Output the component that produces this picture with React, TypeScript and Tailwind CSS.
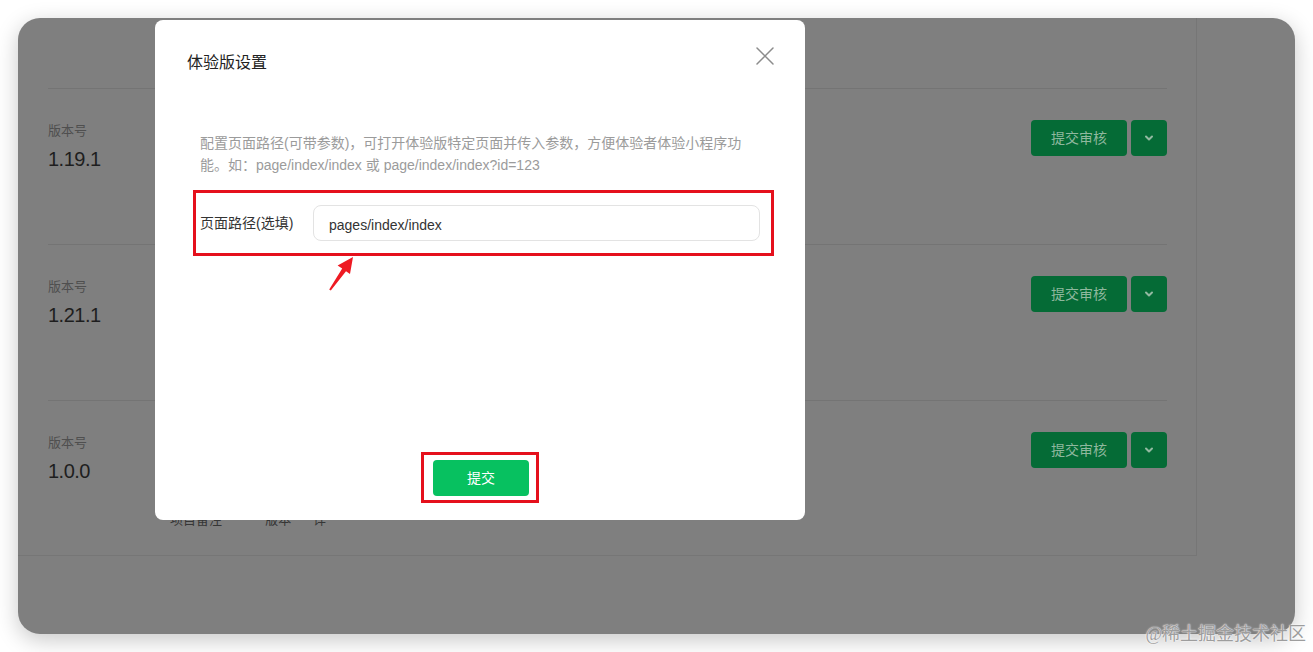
import React from 'react';

const font = { fontFamily: '"Liberation Sans", "Noto Sans CJK SC", sans-serif' };

const versions = ['1.19.1', '1.21.1', '1.0.0'];

const Chevron: React.FC = () => (
    <svg width="12" height="12" viewBox="0 0 12 12" fill="none">
        <path d="M3 4.5 L6 7.5 L9 4.5" stroke="#93b9a1" strokeWidth="2" strokeLinecap="round" strokeLinejoin="round" />
    </svg>
);

const VersionRow: React.FC<{ version: string; last?: boolean }> = ({ version, last }) => (
    <div className="h-[156px] border-t border-[#747474] flex justify-between">
        <div className="flex flex-col pt-[33px]">
            <span className="text-[13px] leading-[18px] text-[#4f4f4f]">版本号</span>
            <span className="text-[20px] leading-[26px] mt-[6px] text-[#1e1e1e] tracking-[-0.5px]">{version}</span>
            {last && (
                <span className="mt-[26px] ml-[122px] text-[13px] text-[#363636] whitespace-nowrap">
                    项目备注&nbsp;&nbsp;&nbsp;&nbsp;&nbsp;&nbsp;&nbsp;&nbsp;&nbsp;&nbsp;&nbsp;&nbsp;版本&nbsp;&nbsp;&nbsp;&nbsp;&nbsp;&nbsp;详
                </span>
            )}
        </div>
        <div className="flex gap-[4px] pt-[31px]">
            <button className="w-[96px] h-[36px] rounded-[4px] bg-[#056b36] text-[14px] text-[#8fb89e]">提交审核</button>
            <button className="w-[36px] h-[36px] rounded-[4px] bg-[#056b36] flex items-center justify-center">
                <Chevron />
            </button>
        </div>
    </div>
);

export default function App() {
    return (
        <div className="w-[1313px] h-[652px] bg-white relative overflow-hidden pt-[18px] pl-[18px]" style={font}>
            {/* dimmed window behind the dialog */}
            <div className="w-[1277px] h-[616px] rounded-[22px] bg-[#7f7f7f] shadow-[0_6px_22px_rgba(0,0,0,0.22)] overflow-hidden">
                <div className="w-[1179px] h-[538px] border-r border-b border-[#767676] pl-[30px] pr-[29px] pt-[70px]">
                    {versions.map((v, i) => (
                        <VersionRow key={v} version={v} last={i === versions.length - 1} />
                    ))}
                </div>
            </div>

            {/* dialog */}
            <div className="absolute left-[155px] top-[20px] w-[650px] h-[500px] bg-white rounded-[8px] flex flex-col">
                <div className="pl-[32px] pt-[31px] text-[16px] leading-[24px] text-[#222]">体验版设置</div>
                <button className="absolute right-[31px] top-[27px] w-[18px] h-[18px]">
                    <svg width="18" height="18" viewBox="0 0 18 18" fill="none">
                        <path d="M1 1 L17 17 M17 1 L1 17" stroke="#8c8c8c" strokeWidth="1.5" strokeLinecap="round" />
                    </svg>
                </button>

                <p className="ml-[45px] mt-[57px] w-[570px] text-[14px] leading-[22px] text-[#9b9b9b] whitespace-nowrap">
                    配置页面路径(可带参数)，可打开体验版特定页面并传入参数，方便体验者体验小程序功
                    <br />
                    能。如：page/index/index 或 page/index/index?id=123
                </p>

                <div className="ml-[38px] mt-[14px] w-[581px] h-[66px] border-[3px] border-[#e5101c] flex items-center pl-[4px] pr-[11px]">
                    <span className="w-[113px] text-[14px] text-[#333]">页面路径(选填)</span>
                    <div className="w-[447px] h-[36px] rounded-[8px] border border-[#e3e3e3] px-[15px] flex items-center text-[14px] text-[#333]">
                        <span className="mt-[4px]">pages/index/index</span>
                    </div>
                </div>

                {/* annotation arrow */}
                <svg className="absolute left-[170px] top-[234px]" width="34" height="40" viewBox="0 0 34 40" fill="none">
                    <polygon
                        points="28,3 25,20 21,17.2 5.8,36.6 4.2,35.4 17.2,14.6 12.6,11.4"
                        fill="#ee1a23"
                    />
                </svg>

                <div className="flex-1" />
                <div className="flex justify-center pb-[17px]">
                    <div className="border-[3px] border-[#e5101c] pl-[9px] pr-[7px] pt-[5px] pb-[4px]">
                        <button className="w-[96px] h-[36px] rounded-[4px] bg-[#07c160] text-white text-[14px]">提交</button>
                    </div>
                </div>
            </div>

            {/* watermark */}
            <div
                className="absolute right-[7px] bottom-[6px] text-[18px] leading-[24px] text-[#9d9d9d] whitespace-nowrap"
                style={{ fontFamily: '"Liberation Serif", "Noto Sans CJK SC", serif', textShadow: '0 0 2px #fff, 0 0 1px #fff' }}
            >
                @稀土掘金技术社区
            </div>
        </div>
    );
}
